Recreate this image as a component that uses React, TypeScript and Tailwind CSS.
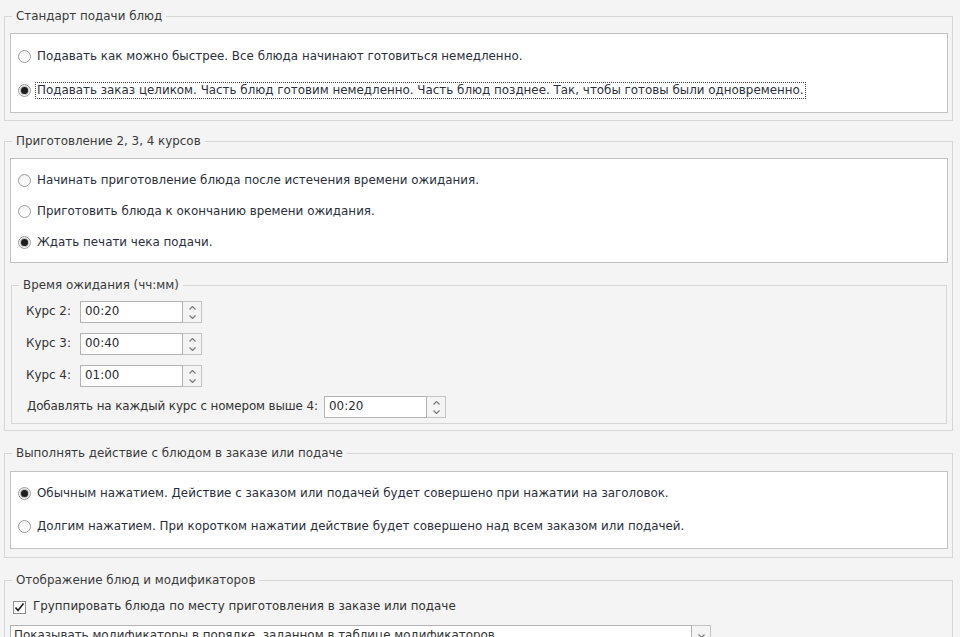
import React from "react";

const Chevron = ({ up = false }: { up?: boolean }) => (
  <svg width="7" height="4" viewBox="0 0 7 4" className="block">
    <polyline
      points={up ? "0.5,3.5 3.5,0.5 6.5,3.5" : "0.5,0.5 3.5,3.5 6.5,0.5"}
      fill="none"
      stroke="#7a7a7a"
      strokeWidth="1.2"
    />
  </svg>
);

const Radio = ({ checked = false }: { checked?: boolean }) => (
  <span className="flex h-[13px] w-[13px] shrink-0 items-center justify-center rounded-full border border-[#9c9c9c] bg-gradient-to-b from-[#f2f2f2] to-white">
    {checked && <span className="h-[7px] w-[7px] rounded-full bg-[#1e1e1e] shadow-[0_0_1px_1px_rgba(60,60,60,0.35)]" />}
  </span>
);

const Group = ({ title, children, className = "" }: { title: string; children: React.ReactNode; className?: string }) => (
  <fieldset className={`border border-[#d6d6d6] px-[5px] pr-[4px] ${className}`}>
    <legend className="ml-[2px] px-[4px] leading-[14px] text-[#3a3a3a]">{title}</legend>
    {children}
  </fieldset>
);

const Option = ({ checked = false, focused = false, children }: { checked?: boolean; focused?: boolean; children: React.ReactNode }) => (
  <div className="flex h-[20px] items-center pl-[7px]">
    <Radio checked={checked} />
    <span className={`ml-[4px] whitespace-nowrap leading-[15px] text-[#2c2f3a] ${focused ? "border border-dotted border-[#444] px-[1px]" : "border border-transparent px-[1px]"}`}>
      {children}
    </span>
  </div>
);

const Spin = ({ value }: { value: string }) => (
  <div className="flex h-[22px]">
    <div className="flex w-[103px] items-center border border-[#b4b4b4] bg-white pl-[4px] text-[#2b2b2b]">{value}</div>
    <div className="flex w-[19px] flex-col items-center justify-center gap-[5px] border border-l-0 border-[#c4c4c4] bg-[#f4f4f4]">
      <Chevron up />
      <Chevron />
    </div>
  </div>
);

export default function App() {
  const courses = [
    { label: "Курс 2:", value: "00:20" },
    { label: "Курс 3:", value: "00:40" },
    { label: "Курс 4:", value: "01:00" },
  ];

  return (
    <div className="h-[637px] overflow-hidden bg-[#f4f4f4] pl-[4px] pr-[7px] pt-[9px] font-['DejaVu_Sans',sans-serif] text-[11.9px] text-[#333]">
      {/* Стандарт подачи */}
      <Group title="Стандарт подачи блюд" className="pb-[7px]">
        <div className="mt-[10px] flex flex-col gap-[14px] border border-[#c2c2c2] bg-white py-[12px]">
          <Option>Подавать как можно быстрее. Все блюда начинают готовиться немедленно.</Option>
          <Option checked focused>
            Подавать заказ целиком. Часть блюд готовим немедленно. Часть блюд позднее. Так, чтобы готовы были одновременно.
          </Option>
        </div>
      </Group>

      {/* Курсы */}
      <Group title="Приготовление 2, 3, 4 курсов" className="mt-[13px] pb-[6px]">
        <div className="mt-[10px] flex flex-col gap-[11px] border border-[#c2c2c2] bg-white pb-[10px] pt-[11px]">
          <Option>Начинать приготовление блюда после истечения времени ожидания.</Option>
          <Option>Приготовить блюда к окончанию времени ожидания.</Option>
          <Option checked>Ждать печати чека подачи.</Option>
        </div>

        <fieldset className="mx-[1px] mt-[15px] border border-[#d6d6d6] px-[5px] pb-[5px]">
          <legend className="ml-[2px] px-[4px] leading-[14px] text-[#3a3a3a]">Время ожидания (чч:мм)</legend>
          <div className="mt-[9px] flex flex-col gap-[10px]">
            {courses.map((c) => (
              <div key={c.label} className="flex items-center pl-[9px]">
                <span className="w-[54px] whitespace-nowrap">{c.label}</span>
                <Spin value={c.value} />
              </div>
            ))}
          </div>
          <div className="mt-[9px] flex items-center pl-[10px]">
            <span className="w-[297px] whitespace-nowrap tracking-[-0.1px]">Добавлять на каждый курс с номером выше 4:</span>
            <Spin value="00:20" />
          </div>
        </fieldset>
      </Group>

      {/* Действие */}
      <Group title="Выполнять действие с блюдом в заказе или подаче" className="mt-[15px] pb-[8px]">
        <div className="mt-[11px] flex flex-col gap-[13px] border border-[#c2c2c2] bg-white pb-[12px] pt-[11px]">
          <Option checked>Обычным нажатием. Действие с заказом или подачей будет совершено при нажатии на заголовок.</Option>
          <Option>Долгим нажатием. При коротком нажатии действие будет совершено над всем заказом или подачей.</Option>
        </div>
      </Group>

      {/* Отображение */}
      <Group title="Отображение блюд и модификаторов" className="mt-[15px] pb-[8px]">
        <div className="mt-[10px] flex h-[20px] items-center pl-[3px]">
          <span className="flex h-[13px] w-[13px] items-center justify-center border border-[#8f8f8f] bg-white">
            <svg width="11" height="11" viewBox="0 0 11 11">
              <polyline points="1.5,5.5 4,8.5 9.5,1.5" fill="none" stroke="#222" strokeWidth="1.7" />
            </svg>
          </span>
          <span className="ml-[7px] whitespace-nowrap">Группировать блюда по месту приготовления в заказе или подаче</span>
        </div>
        <div className="mt-[8px] flex h-[22px] w-[701px]">
          <div className="flex flex-1 items-center border border-[#b4b4b4] bg-white pl-[3px] whitespace-nowrap">
            Показывать модификаторы в порядке, заданном в таблице модификаторов
          </div>
          <div className="flex w-[19px] items-center justify-center border border-l-0 border-[#c4c4c4] bg-[#f4f4f4]">
            <Chevron />
          </div>
        </div>
      </Group>
    </div>
  );
}
